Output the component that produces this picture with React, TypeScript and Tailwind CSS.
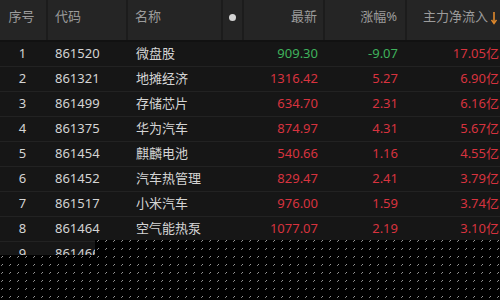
import React from "react";

type Row = [string, string, string, string, string, string];
const rows: Row[] = [
  ["1", "861520", "微盘股", "909.30", "-9.07", "17.05亿"],
  ["2", "861321", "地摊经济", "1316.42", "5.27", "6.90亿"],
  ["3", "861499", "存储芯片", "634.70", "2.31", "6.16亿"],
  ["4", "861375", "华为汽车", "874.97", "4.31", "5.67亿"],
  ["5", "861454", "麒麟电池", "540.66", "1.16", "4.55亿"],
  ["6", "861452", "汽车热管理", "829.47", "2.41", "3.79亿"],
  ["7", "861517", "小米汽车", "976.00", "1.59", "3.74亿"],
  ["8", "861464", "空气能热泵", "1077.07", "2.19", "3.10亿"],
  ["9", "861466", "汽车拆解", "1023.11", "1.02", "2.98亿"],
];

const green = "text-[#3fb25c]";
const red = "text-[#d8333f]";

export default function App() {
  return (
    <div
      className="relative w-[500px] h-[300px] overflow-hidden bg-[#161616] text-[13px]"
      style={{ fontFamily: '"Noto Sans", "Noto Sans CJK SC", sans-serif' }}
    >
      {/* header */}
      <div className="grid grid-cols-[48px_80px_95px_21px_81px_82px_93px] h-[42px] bg-[#252525] text-[#9c9c9c] border-b-2 border-[#111]">
        <div className="border-r-2 border-[#1c1c1c] text-center pr-[3px] pt-[7px]">序号</div>
        <div className="border-r-2 border-[#1c1c1c] pl-[7px] pt-[7px]">代码</div>
        <div className="border-r-2 border-[#1c1c1c] pl-[7px] pt-[7px]">名称</div>
        <div className="border-r-2 border-[#1c1c1c] flex justify-center pt-[14px]">
          <div className="w-[7px] h-[7px] rounded-full bg-[#d4d4d4]" />
        </div>
        <div className="border-r-2 border-[#1c1c1c] text-right pr-[6px] pt-[7px]">最新</div>
        <div className="border-r-2 border-[#1c1c1c] text-right pr-[8px] pt-[7px]">涨幅%</div>
        <div className="pl-[16px] pt-[7px] flex items-start gap-[3px] whitespace-nowrap">
          <span>主力净流入</span>
          <svg width="6" height="14" viewBox="0 0 6 14" className="mt-[4px]">
            <path d="M3 1 V12" stroke="#e0892c" strokeWidth="1.6" />
            <path d="M0.5 9 L3 12.5 L5.5 9" stroke="#e0892c" strokeWidth="1.4" fill="none" />
          </svg>
        </div>
      </div>
      {/* rows */}
      {rows.map((r, i) => {
        const neg = r[4].startsWith("-");
        const c = neg ? green : red;
        return (
          <div
            key={i}
            className="grid grid-cols-[48px_80px_95px_21px_81px_82px_93px] h-[25px] items-center border-b border-[#222] text-[#d4d4d4]"
          >
            <div className="text-center pr-[3px]">{r[0]}</div>
            <div className="pl-[7px]">{r[1]}</div>
            <div className="pl-[8px] whitespace-nowrap">{r[2]}</div>
            <div />
            <div className={`text-right pr-[7px] ${c}`}>{r[3]}</div>
            <div className={`text-right pr-[9px] ${c}`}>{r[4]}</div>
            <div className={`text-right pr-[1px] ${red} whitespace-nowrap`}>{r[5]}</div>
          </div>
        );
      })}
      {/* dithered overlay at the bottom */}
      <svg
        className="absolute left-0 top-[240px]"
        width="500"
        height="60"
        viewBox="0 0 500 60"
      >
        <defs>
          <pattern id="dots" x="1" y="0" width="8" height="8" patternUnits="userSpaceOnUse">
            <rect x="0" y="0" width="8" height="8" fill="#000" />
            <rect x="1" y="0" width="1" height="1" fill="#9a9a9a" />
            <rect x="0" y="1" width="1" height="1" fill="#7a7a7a" />
          </pattern>
        </defs>
        <path d="M95 0 H500 V60 H0 V15 H95 Z" fill="url(#dots)" />
      </svg>
    </div>
  );
}
